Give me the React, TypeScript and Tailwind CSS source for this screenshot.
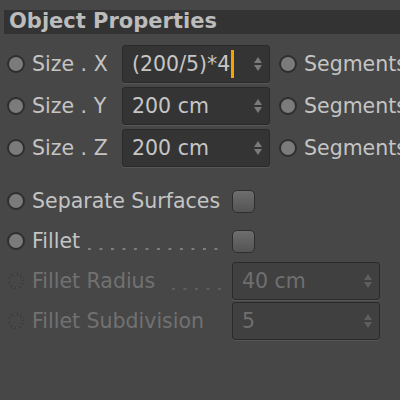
import React from "react";

function Radio({ disabled = false }: { disabled?: boolean }) {
  if (disabled) {
    return (
      <svg width="18" height="18" viewBox="0 0 18 18" className="shrink-0">
        <circle cx="9" cy="9" r="7" fill="none" stroke="#3a3a3a" strokeWidth="2.5" strokeDasharray="3 1.5" />
        <circle cx="9" cy="9" r="7" fill="none" stroke="#5c5c5c" strokeWidth="1" strokeDasharray="2 2.5" />
      </svg>
    );
  }
  return (
    <div className="h-[18px] w-[18px] shrink-0 rounded-full border-[2px] border-[#2e2e2e] bg-[#7b7b7b]" />
  );
}

function Stepper({ disabled = false }: { disabled?: boolean }) {
  const c = disabled ? "#5e5e5e" : "#7a7a7a";
  return (
    <svg width="10" height="16" viewBox="0 0 10 16" className="shrink-0">
      <path d="M5 1 L9 7 H1 Z" fill={c} />
      <path d="M5 15 L9 9 H1 Z" fill={c} />
    </svg>
  );
}

function NumField({
  value,
  cursor = false,
  disabled = false,
}: {
  value: string;
  cursor?: boolean;
  disabled?: boolean;
}) {
  return (
    <div
      className={`flex h-[38px] w-[148px] shrink-0 items-center justify-between rounded-[3px] border border-[#2a2a2a] pl-[9px] pr-[6px] shadow-[0_1px_0_#565656] ${
        disabled ? "bg-[#404040] text-[#6f6f6f]" : "bg-[#343434] text-[#c6c6c6]"
      }`}
    >
      <span className="flex items-center whitespace-nowrap">
        {value}
        {cursor && <span className="ml-[1px] inline-block h-[28px] w-[3px] bg-[#f5a300]" />}
      </span>
      <Stepper disabled={disabled} />
    </div>
  );
}

function Checkbox() {
  return (
    <div className="h-[23px] w-[23px] shrink-0 rounded-[5px] border border-[#2e2e2e] bg-gradient-to-b from-[#6e6e6e] to-[#545454]" />
  );
}

function Leader({ disabled = false }: { disabled?: boolean }) {
  return (
    <div
      className={`mb-[6px] h-[2px] flex-1 self-end bg-repeat-x ${
        disabled
          ? "bg-[linear-gradient(to_right,#5f5f5f_3px,transparent_3px)]"
          : "bg-[linear-gradient(to_right,#7e7e7e_3px,transparent_3px)]"
      } bg-[length:11.5px_2px]`}
    />
  );
}

const sizes = [
  { label: "Size . X", value: "(200/5)*4", cursor: true },
  { label: "Size . Y", value: "200 cm" },
  { label: "Size . Z", value: "200 cm" },
];

export default function App() {
  return (
    <div className="h-[400px] w-[400px] overflow-hidden bg-[#474747] pt-[10px] font-['DejaVu_Sans',sans-serif] text-[20.5px] text-[#c4c4c4]">
      <div className="ml-[4px] flex h-[24px] items-center bg-[#333333] pl-[5px] text-[21px] font-bold text-[#bcbcbc]">
        Object Properties
      </div>

      <div className="mt-[9px]">
        {sizes.map((s) => (
          <div key={s.label} className="flex h-[42px] items-center whitespace-nowrap">
            <div className="ml-[7px] flex w-[115px] shrink-0 items-center gap-[7px]">
              <Radio />
              <span>{s.label}</span>
            </div>
            <NumField value={s.value} cursor={s.cursor} />
            <div className="ml-[9px] flex shrink-0 items-center gap-[7px]">
              <Radio />
              <span>Segments</span>
            </div>
          </div>
        ))}
      </div>

      <div className="mt-[12px]">
        <div className="flex h-[40px] items-center whitespace-nowrap">
          <div className="ml-[7px] flex w-[225px] shrink-0 items-center gap-[7px]">
            <Radio />
            <span>Separate Surfaces</span>
          </div>
          <Checkbox />
        </div>
        <div className="flex h-[40px] items-center whitespace-nowrap">
          <div className="ml-[7px] flex w-[225px] shrink-0 items-center gap-[7px] pr-[6px]">
            <Radio />
            <span className="mr-[1px]">Fillet</span>
            <Leader />
          </div>
          <Checkbox />
        </div>
        <div className="flex h-[40px] items-center whitespace-nowrap text-[#717171]">
          <div className="ml-[7px] flex w-[225px] shrink-0 items-center gap-[7px] pr-[6px]">
            <Radio disabled />
            <span className="mr-[10px]">Fillet Radius</span>
            <Leader disabled />
          </div>
          <NumField value="40 cm" disabled />
        </div>
        <div className="flex h-[40px] items-center whitespace-nowrap text-[#717171]">
          <div className="ml-[7px] flex w-[225px] shrink-0 items-center gap-[7px]">
            <Radio disabled />
            <span>Fillet Subdivision</span>
          </div>
          <NumField value="5" disabled />
        </div>
      </div>
    </div>
  );
}
